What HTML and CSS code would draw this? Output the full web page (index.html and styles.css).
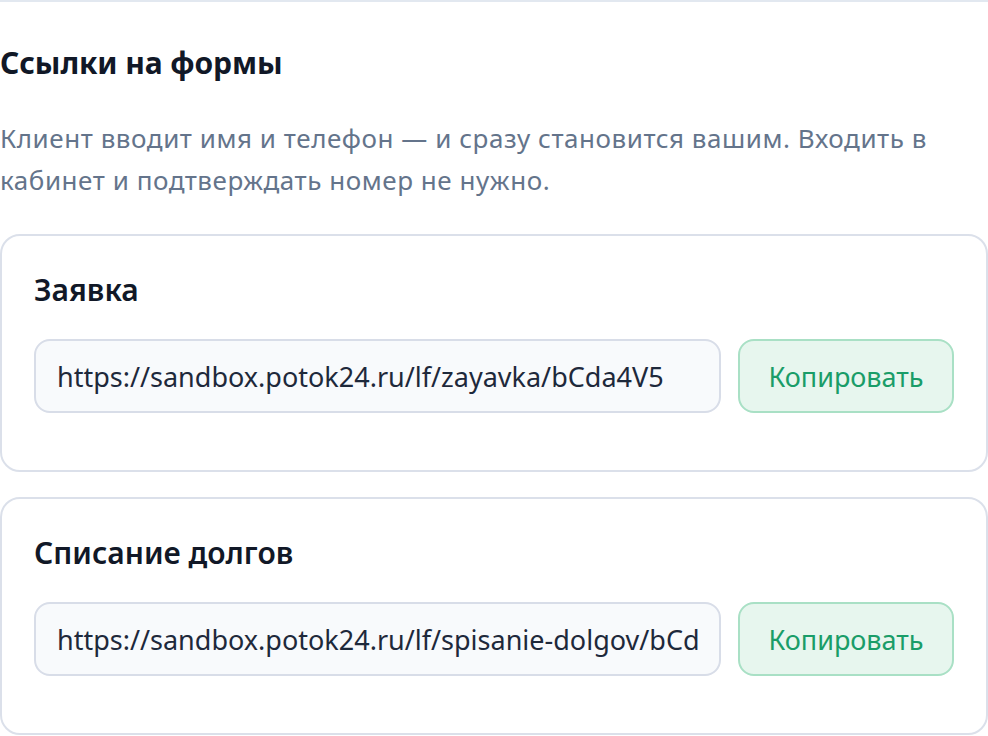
FILE: index.html
```html
<!DOCTYPE html>
<html lang="ru">
<head>
<meta charset="utf-8">
<title>Ссылки на формы</title>
<link rel="stylesheet" href="styles.css">
</head>
<body>
<section class="section">
  <h2 class="section-title">Ссылки на формы</h2>
  <p class="section-desc">Клиент вводит имя и телефон — и сразу становится вашим. Входить в кабинет и подтверждать номер не нужно.</p>
  <div class="cards">
    <div class="card">
      <h3 class="card-title">Заявка</h3>
      <div class="link-row">
        <input class="link-input" type="text" readonly value="https://sandbox.potok24.ru/lf/zayavka/bCda4V5">
        <button class="copy-btn" type="button">Копировать</button>
      </div>
    </div>
    <div class="card">
      <h3 class="card-title">Списание долгов</h3>
      <div class="link-row">
        <input class="link-input" type="text" readonly value="https://sandbox.potok24.ru/lf/spisanie-dolgov/bCda4V5">
        <button class="copy-btn" type="button">Копировать</button>
      </div>
    </div>
  </div>
</section>
</body>
</html>
```

FILE: styles.css
```css
* { box-sizing: border-box; }
html, body { margin: 0; padding: 0; background: #ffffff; }
body {
  font-family: "Noto Sans", "Open Sans", sans-serif;
  color: #111827;
  width: 988px;
  overflow: hidden;
}
.section {
  border-top: 2px solid #e2e8f0;
  padding-top: 41px;
}
.section-title {
  margin: 0;
  font-size: 30px;
  line-height: 40px;
  font-weight: 700;
  letter-spacing: -0.1px;
  color: #111827;
}
.section-desc {
  margin: 34px 0 0;
  font-size: 26px;
  line-height: 42px;
  letter-spacing: 0.55px;
  color: #64748b;
}
.cards {
  margin-top: 33px;
  display: flex;
  flex-direction: column;
  gap: 25px;
}
.card {
  border: 2px solid #dbe0ea;
  border-radius: 20px;
  padding: 33px 32px 57px;
  background: #ffffff;
}
.card-title {
  margin: 0;
  font-size: 30px;
  line-height: 41px;
  font-weight: 600;
  color: #111827;
}
.link-row {
  margin-top: 29px;
  display: flex;
  gap: 17px;
}
.link-input {
  flex: 1;
  min-width: 0;
  height: 74px;
  border: 2px solid #d8dde8;
  border-radius: 16px;
  background: #f8fafc;
  padding: 0 21px;
  font-family: "Noto Sans", "Open Sans", sans-serif;
  font-size: 27px;
  color: #1e293b;
  outline: none;
}
.copy-btn {
  flex: 0 0 216px;
  height: 74px;
  border: 2px solid #a9e0c5;
  border-radius: 16px;
  background: #e7f6ee;
  color: #1a9d68;
  font-family: "Noto Sans", "Open Sans", sans-serif;
  font-size: 27px;
  padding: 0;
  cursor: pointer;
}
```
